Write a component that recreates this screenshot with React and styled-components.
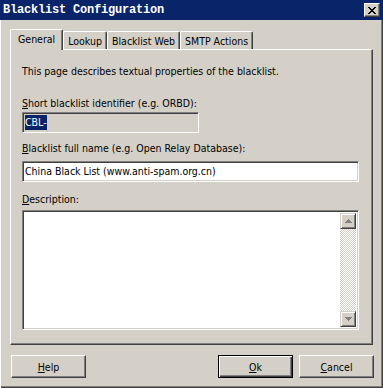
import React from 'react';
import styled, { createGlobalStyle, css } from 'styled-components';

const GlobalStyle = createGlobalStyle`
  html, body {
    margin: 0;
    padding: 0;
    background: #d4d0c8;
  }
  body {
    font-family: "DejaVu Sans Condensed", "DejaVu Sans", sans-serif;
    font-size: 10.5px;
    color: #000;
  }
  * {
    box-sizing: border-box;
  }
`;

const Window = styled.div`
  width: 383px;
  height: 388px;
  background: #d4d0c8;
  display: flex;
  flex-direction: column;
  box-shadow: inset 1px 0 #fff, inset -1px -1px #404040, inset -2px -2px #808080;
`;

const TitleBar = styled.div`
  height: 20px;
  background: #0a246a;
  display: flex;
  align-items: center;
  justify-content: space-between;
  padding: 0 3px;
`;

const Title = styled.span`
  font-family: "Liberation Mono", "Courier New", monospace;
  font-weight: bold;
  font-size: 12px;
  letter-spacing: -0.2px;
  line-height: 14px;
  color: #fff;
`;

const CloseButton = styled.div`
  width: 16px;
  height: 14px;
  background: #d4d0c8;
  border: 1px solid;
  border-color: #fff #404040 #404040 #fff;
  box-shadow: inset -1px -1px #808080;
  display: flex;
  align-items: center;
  justify-content: center;
`;

const Body = styled.div`
  padding: 9px 10px 0 10px;
  display: flex;
  flex-direction: column;
`;

const TabRow = styled.div`
  display: flex;
  align-items: flex-end;
  height: 20px;
  position: relative;
  z-index: 1;
`;

const Tab = styled.div`
  height: ${p => (p.$active ? 21 : 18)}px;
  margin-bottom: ${p => (p.$active ? -1 : 0)}px;
  padding: 3px ${p => (p.$active ? 7 : 4)}px 0;
  border-top: 1px solid #fff;
  border-left: 1px solid #fff;
  border-right: 1px solid #404040;
  border-radius: 2px 2px 0 0;
  box-shadow: inset -1px 0 #808080;
  background: #d4d0c8;
  line-height: 13px;
  white-space: nowrap;
`;

const Panel = styled.div`
  height: 296px;
  border: 1px solid;
  border-color: #fff #404040 #404040 #fff;
  box-shadow: inset -1px -1px #808080;
  padding: 15px 0 0 11px;
  display: flex;
  flex-direction: column;
  align-items: flex-start;
`;

const Text = styled.div`
  line-height: 13px;
  margin-top: ${p => p.$top || 0}px;
  margin-bottom: ${p => p.$bottom || 0}px;
`;

const sunken = css`
  border: 1px solid;
  border-color: #808080 #fff #fff #808080;
  box-shadow: inset 1px 1px #404040, inset -1px -1px #d4d0c8;
`;

const Input = styled.div`
  ${sunken};
  width: ${p => p.$width}px;
  height: 21px;
  padding: 0 2px;
  background: ${p => (p.$readOnly ? '#d4d0c8' : '#fff')};
  display: flex;
  align-items: center;
  line-height: 13px;
  white-space: nowrap;
`;

const Selected = styled.span`
  background: #0a246a;
  color: #fff;
  padding: 1px 0;
`;

const TextArea = styled.div`
  ${sunken};
  width: 337px;
  height: 120px;
  padding: 2px;
  background: #fff;
  display: flex;
  justify-content: flex-end;
`;

const ScrollBar = styled.div`
  width: 16px;
  display: flex;
  flex-direction: column;
`;

const ArrowButton = styled.div`
  width: 16px;
  height: 16px;
  background: #d4d0c8;
  border: 1px solid;
  border-color: #d4d0c8 #404040 #404040 #d4d0c8;
  box-shadow: inset 1px 1px #fff, inset -1px -1px #808080;
  display: flex;
  align-items: center;
  justify-content: center;
`;

const Track = styled.div`
  flex: 1;
  background-image: repeating-conic-gradient(#fff 0 25%, #d4d0c8 0 50%);
  background-size: 2px 2px;
`;

const Footer = styled.div`
  display: flex;
  margin-top: 10px;
  padding-left: 1px;
  margin-right: -1px;
`;

const Spacer = styled.div`
  flex: 1;
`;

const Button = styled.button`
  width: 75px;
  height: 23px;
  margin-left: ${p => p.$gap || 0}px;
  padding: 0;
  font-family: inherit;
  font-size: 10.5px;
  color: #000;
  background: #d4d0c8;
  border: 1px solid;
  border-color: #fff #404040 #404040 #fff;
  box-shadow: inset -1px -1px #808080;
  ${p =>
    p.$default &&
    css`
      border-color: #000;
      box-shadow: inset 1px 1px #fff, inset -1px -1px #404040, inset -2px -2px #808080;
    `}
`;

const CloseGlyph = () => (
  <svg width="8" height="7" viewBox="0 0 8 7" shapeRendering="crispEdges">
    <path
      fill="#000"
      d="M0 0h2v1H0zM6 0h2v1H6zM1 1h2v1H1zM5 1h2v1H5zM2 2h4v1H2zM3 3h2v1H3zM2 4h4v1H2zM1 5h2v1H1zM5 5h2v1H5zM0 6h2v1H0zM6 6h2v1H6z"
    />
  </svg>
);

const Arrow = ({ up }) => (
  <svg width="7" height="4" viewBox="0 0 7 4" shapeRendering="crispEdges">
    <path
      fill="#808080"
      d={up ? 'M3 0h1v1h1v1h1v1h1v1H0V3h1V2h1V1h1z' : 'M0 0h7v1H6v1H5v1H4v1H3V3H2V2H1V1H0z'}
    />
  </svg>
);

export default function App() {
  return (
    <>
      <GlobalStyle />
      <Window>
        <TitleBar>
          <Title>Blacklist Configuration</Title>
          <CloseButton>
            <CloseGlyph />
          </CloseButton>
        </TitleBar>
        <Body>
          <TabRow>
            <Tab $active>General</Tab>
            <Tab>Lookup</Tab>
            <Tab>Blacklist Web</Tab>
            <Tab>SMTP Actions</Tab>
          </TabRow>
          <Panel>
            <Text>This page describes textual properties of the blacklist.</Text>
            <Text $top={19} $bottom={2}>
              <u>S</u>hort blacklist identifier (e.g. ORBD):
            </Text>
            <Input $width={177} $readOnly>
              <Selected>CBL-</Selected>
            </Input>
            <Text $top={9} $bottom={6}>
              <u>B</u>lacklist full name (e.g. Open Relay Database):
            </Text>
            <Input $width={337}>China Black List (www.anti-spam.org.cn)</Input>
            <Text $top={11} $bottom={4}>
              <u>D</u>escription:
            </Text>
            <TextArea>
              <ScrollBar>
                <ArrowButton>
                  <Arrow up />
                </ArrowButton>
                <Track />
                <ArrowButton>
                  <Arrow />
                </ArrowButton>
              </ScrollBar>
            </TextArea>
          </Panel>
          <Footer>
            <Button>
              <u>H</u>elp
            </Button>
            <Spacer />
            <Button $default>
              <u>O</u>k
            </Button>
            <Button $gap={6}>
              <u>C</u>ancel
            </Button>
          </Footer>
        </Body>
      </Window>
    </>
  );
}
